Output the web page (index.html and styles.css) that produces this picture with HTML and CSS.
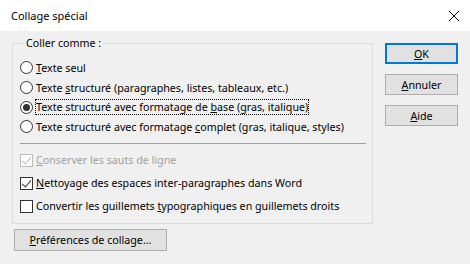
FILE: index.html
```html
<!DOCTYPE html>
<html lang="fr">
<head>
    <meta charset="UTF-8">
    <title>Collage spécial</title>
    <link rel="stylesheet" href="styles.css">
</head>
<body>
    <div class="dialog">
        <div class="titlebar">
            <span class="title">Collage spécial</span>
            <svg class="close" width="12" height="12" viewBox="0 0 12 12">
                <path d="M1 1 L11 11 M11 1 L1 11" stroke="#000" stroke-width="1" fill="none"/>
            </svg>
        </div>

        <div class="content">
            <div class="main">
                <fieldset class="group">
                    <legend>Coller comme :</legend>

                    <!-- Paste format options -->
                    <div class="options">
                        <label class="row"><span class="radio"></span><span><u>T</u>exte seul</span></label>
                        <label class="row"><span class="radio"></span><span>Texte <u>s</u>tructuré (paragraphes, listes, tableaux, etc.)</span></label>
                        <label class="row"><span class="radio checked"></span><span class="focus">Texte structuré avec formatage de <u>b</u>ase (gras, italique)</span></label>
                        <label class="row"><span class="radio"></span><span>Texte structuré avec formatage <u>c</u>omplet (gras, italique, styles)</span></label>
                    </div>

                    <div class="sep"></div>

                    <div class="checks">
                        <label class="row check-row disabled"><span class="checkbox checked"></span><span><u>C</u>onserver les sauts de ligne</span></label>
                        <label class="row check-row"><span class="checkbox checked"></span><span><u>N</u>ettoyage des espaces inter-paragraphes dans Word</span></label>
                        <label class="row check-row"><span class="checkbox"></span><span>Convertir les guillemets <u>t</u>ypographiques en guillemets droits</span></label>
                    </div>
                </fieldset>

                <button class="btn pref-btn"><u>P</u>références de collage...</button>
            </div>

            <div class="side">
                <button class="btn default-btn"><u>O</u>K</button>
                <button class="btn"><u>A</u>nnuler</button>
                <button class="btn"><u>A</u>ide</button>
            </div>
        </div>
    </div>
</body>
</html>
```

FILE: styles.css
```css
body {
    margin: 0;
    font-family: 'Noto Sans', 'Liberation Sans', sans-serif;
    font-size: 10.7px;
    color: #000;
    background: #f0f0f0;
}

.dialog {
    width: 470px;
    height: 264px;
    display: flex;
    flex-direction: column;
}

.titlebar {
    height: 31px;
    background: white;
    display: flex;
    align-items: center;
    justify-content: space-between;
    padding: 0 10px 0 11px;
}

.title {
    font-size: 11px;
}

.close {
    display: block;
}

.content {
    display: flex;
    gap: 12px;
    padding: 4px 12px 0 12px;
}

.main {
    display: flex;
    flex-direction: column;
    align-items: flex-start;
    gap: 5px;
}

.group {
    width: 361px;
    height: 189px;
    margin: 0;
    padding: 7px 6px 0 7px;
    border: 1px solid #dcdcdc;
    box-sizing: border-box;
}

.group legend {
    padding: 0 2px;
    margin-left: 4px;
    line-height: 16px;
}

.options {
    display: flex;
    flex-direction: column;
}

.row {
    display: flex;
    align-items: center;
    gap: 3px;
    height: 19.7px;
    white-space: nowrap;
}

.radio {
    width: 11px;
    height: 11px;
    border: 1px solid #333;
    border-radius: 50%;
    background: white;
    display: flex;
    align-items: center;
    justify-content: center;
    flex-shrink: 0;
}

.radio.checked::after {
    content: '';
    width: 7px;
    height: 7px;
    border-radius: 50%;
    background: #333;
}

.focus {
    outline: 1px dotted #000;
    outline-offset: 0;
}

.sep {
    height: 1px;
    background: #a0a0a0;
    margin: 6px 0 5px 0;
}

.checks {
    display: flex;
    flex-direction: column;
}

.check-row {
    height: 23px;
}

.checkbox {
    width: 11px;
    height: 11px;
    border: 1px solid #333;
    background: white;
    position: relative;
    flex-shrink: 0;
}

.checkbox.checked::after {
    content: '';
    position: absolute;
    left: 3px;
    top: 0px;
    width: 4px;
    height: 8px;
    border-right: 1px solid #333;
    border-bottom: 1px solid #333;
    transform: rotate(40deg);
}

.disabled {
    color: #a0a0a0;
}

.disabled .checkbox {
    border-color: #bcbcbc;
}

.disabled .checkbox.checked::after {
    border-color: #bcbcbc;
}

.side {
    display: flex;
    flex-direction: column;
    gap: 10px;
    padding-top: 8px;
}

.btn {
    font-family: 'Noto Sans', 'Liberation Sans', sans-serif;
    font-size: 10.7px;
    color: #000;
    background: #e1e1e1;
    border: 1px solid #adadad;
    padding: 0;
    width: 73px;
    height: 21px;
}

.default-btn {
    border: 2px solid #0078d7;
}

.pref-btn {
    width: 153px;
    height: 22px;
    margin-left: 2px;
}
```
